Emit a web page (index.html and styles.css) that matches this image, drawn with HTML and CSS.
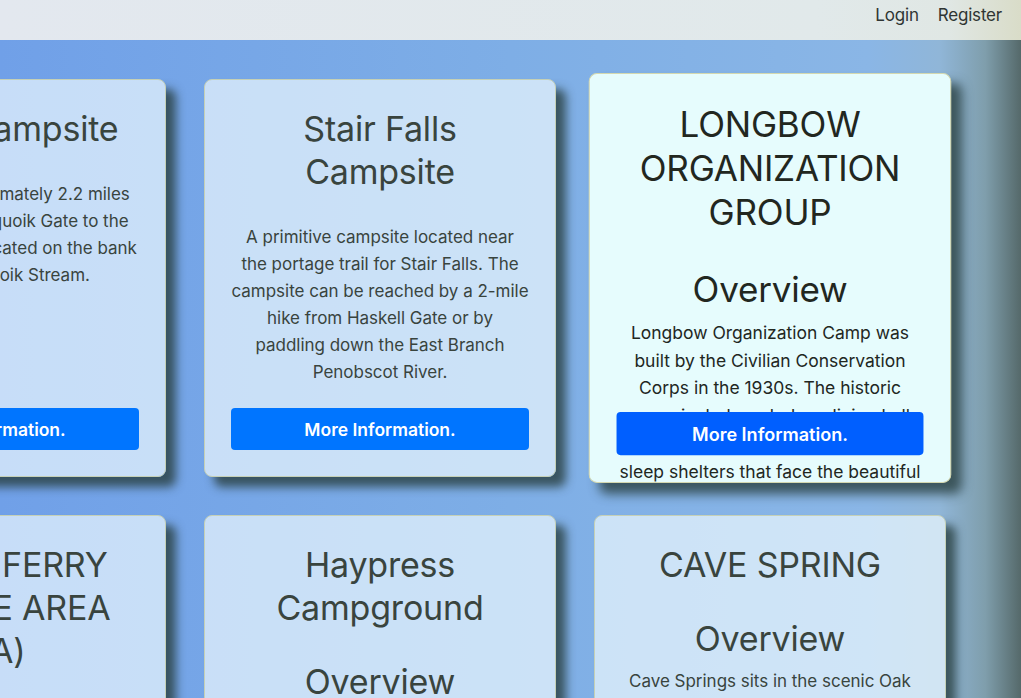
FILE: index.html
```html
<!DOCTYPE html>
<html lang="en">
<head>
<meta charset="utf-8">
<title>Campsites</title>
<link rel="stylesheet" href="styles.css">
</head>
<body>
<nav class="topbar">
  <a class="nav-link" href="#">Login</a>
  <a class="nav-link" href="#">Register</a>
</nav>
<main class="stage">
  <div class="grid">
    <article class="card">
      <h2 class="card-title">Lower Campsite</h2>
      <p class="card-text">This site is approximately 2.2 miles from the Wassataquoik Gate to the campsite, and is located on the bank of Wassataquoik Stream.</p>
      <a class="btn" href="#">More Information.</a>
    </article>
    <article class="card">
      <h2 class="card-title">Stair Falls Campsite</h2>
      <p class="card-text">A primitive campsite located near the portage trail for Stair Falls. The campsite can be reached by a 2-mile hike from Haskell Gate or by paddling down the East Branch Penobscot River.</p>
      <a class="btn" href="#">More Information.</a>
    </article>
    <article class="card card-active">
      <h2 class="card-title">LONGBOW ORGANIZATION GROUP</h2>
      <h3 class="card-sub">Overview</h3>
      <p class="card-text">Longbow Organization Camp was built by the Civilian Conservation Corps in the 1930s. The historic camp includes a lodge, dining hall and bath house, along with eight sleep shelters that face the beautiful Lake Longbow.</p>
      <a class="btn" href="#">More Information.</a>
    </article>
    <article class="card">
      <h2 class="card-title">SEBOIS FERRY DAY USE AREA (DA)</h2>
      <h3 class="card-sub">Overview</h3>
      <p class="card-text">A day use area along the river with picnic tables and a boat launch.</p>
      <a class="btn" href="#">More Information.</a>
    </article>
    <article class="card">
      <h2 class="card-title">Haypress Campground</h2>
      <h3 class="card-sub">Overview</h3>
      <p class="card-text">Haypress Campground sits along the creek in a quiet forest setting.</p>
      <a class="btn" href="#">More Information.</a>
    </article>
    <article class="card">
      <h2 class="card-title">CAVE SPRING</h2>
      <h3 class="card-sub">Overview</h3>
      <p class="card-text">Cave Springs sits in the scenic Oak Creek Canyon along the banks of the creek.</p>
      <a class="btn" href="#">More Information.</a>
    </article>
  </div>
</main>
</body>
</html>
```
FILE: styles.css
```css
html, body {
  margin: 0;
  height: 100%;
}
body {
  font-family: Inter, "Noto Sans", "Liberation Sans", sans-serif;
  overflow: hidden;
  display: flex;
  flex-direction: column;
  background: #78a6e6;
}
.topbar {
  height: 40px;
  flex: 0 0 40px;
  box-sizing: border-box;
  display: flex;
  justify-content: flex-end;
  align-items: center;
  gap: 19px;
  padding: 0 19px 10px 0;
  background: linear-gradient(90deg, #e3e8ef 0%, #e1e9ea 80%, #e0e7e4 93%, #d9dcc8 100%);
}
.nav-link {
  color: #2f3533;
  text-decoration: none;
  font-size: 17px;
  line-height: 20px;
  letter-spacing: -0.2px;
}
.stage {
  flex: 1;
  background: linear-gradient(90deg, #70a0e8 0%, #7eaee6 50%, #8ab6e6 85%, #90b6d8 92%, #7f9eac 96.5%, #55696a 100%);
  padding-top: 39px;
}
.grid {
  display: grid;
  grid-template-columns: repeat(3, 352px);
  grid-auto-rows: 398px;
  gap: 38px;
  margin-left: -186px;
}
.card {
  position: relative;
  box-sizing: border-box;
  overflow: hidden;
  padding: 27px 26px;
  text-align: center;
  color: #39443e;
  background: rgba(240, 250, 255, 0.68);
  border: 1px solid #c5d0b6;
  border-radius: 8px;
  box-shadow: 10px 10px 10px rgba(40, 62, 62, 0.8);
}
.card-active {
  transform: scale(1.03);
  background: #e6fcfd;
  color: #22271f;
  border-color: #d4d8b0;
}
.card-title,
.card-sub {
  font-size: 34px;
  line-height: 43px;
  font-weight: 400;
  margin: 0 0 31px;
  letter-spacing: -0.2px;
}
.card-sub {
  margin-bottom: 8px;
}
.card-text {
  font-size: 17px;
  line-height: 27px;
  margin: 0;
  letter-spacing: -0.02px;
}
.btn {
  position: absolute;
  left: 26px;
  right: 26px;
  bottom: 26px;
  height: 42px;
  display: flex;
  align-items: center;
  justify-content: center;
  background: #0075ff;
  color: #fff;
  font-weight: 600;
  font-size: 17.5px;
  text-decoration: none;
  border-radius: 4px;
}
.card-active .btn {
  background: #005fff;
}
```
